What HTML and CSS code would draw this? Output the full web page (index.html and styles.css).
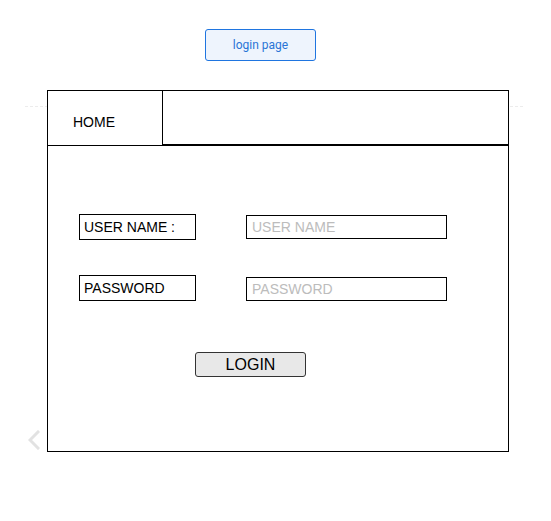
FILE: index.html
```html
<!DOCTYPE html>
<html lang="en">
<head>
<meta charset="utf-8">
<title>login page</title>
<link rel="stylesheet" href="styles.css">
</head>
<body>
  <div class="toolbar">
    <button class="page-btn" type="button">login page</button>
  </div>
  <div class="stage">
    <div class="gutter">
      <svg class="chevron" width="12" height="20" viewBox="0 0 12 20" aria-hidden="true">
        <path d="M10 2 L2 10 L10 18" fill="none" stroke="#e2e2e2" stroke-width="3" stroke-linecap="square"/>
      </svg>
    </div>
    <div class="frame">
      <div class="tabs">
        <div class="tab">HOME</div>
        <div class="tab-rest"></div>
      </div>
      <div class="form">
        <div class="row">
          <div class="label">USER NAME :</div>
          <input class="field" type="text" placeholder="USER NAME">
        </div>
        <div class="row row-2">
          <div class="label">PASSWORD</div>
          <input class="field field-2" type="password" placeholder="PASSWORD">
        </div>
        <div class="actions">
          <button class="login-btn" type="button">LOGIN</button>
        </div>
      </div>
    </div>
  </div>
</body>
</html>
```
FILE: styles.css
```css
* { box-sizing: border-box; }
html, body { margin: 0; padding: 0; background: #fff; }
body { font-family: "Liberation Sans", Arial, sans-serif; color: #000; width: 551px; height: 521px; overflow: hidden; }

.toolbar { padding: 29px 0 0 205px; }
.page-btn {
  display: block;
  width: 111px;
  height: 32px;
  margin: 0;
  padding: 0;
  border: 1px solid #1f75e0;
  border-radius: 3px;
  background: #eef4fd;
  color: #2a74d6;
  font-family: Roboto, "Liberation Sans", sans-serif;
  font-size: 12px;
}

.stage {
  margin: 29px 0 0 25px;
  width: 500px;
  display: flex;
  background-image: repeating-linear-gradient(to right, #ececec 0 3px, transparent 3px 5px);
  background-repeat: no-repeat;
  background-size: 100% 1px;
  background-position: 0 16px;
}
.gutter { width: 22px; display: flex; align-items: flex-end; padding: 0 0 2px 3px; }
.chevron { display: block; }

.frame {
  width: 462px;
  height: 362px;
  border: 1px solid #000;
  background: #fff;
  display: flex;
  flex-direction: column;
}
.tabs { display: flex; height: 55px; }
.tab {
  width: 115px;
  border-right: 1px solid #000;
  border-bottom: 1px solid #000;
  padding: 23px 0 0 25px;
  font-size: 14px;
  line-height: 16px;
}
.tab-rest { flex: 1; border-bottom: 2px solid #000; }

.form { flex: 1; padding: 68px 0 0 31px; }
.row { display: flex; align-items: center; gap: 50px; height: 26px; }
.row-2 { margin-top: 35px; }
.label {
  width: 117px;
  height: 26px;
  border: 1px solid #000;
  padding: 4px 0 0 4px;
  font-size: 14px;
  line-height: 16px;
}
.field {
  width: 201px;
  height: 24px;
  margin: 0;
  border: 1px solid #000;
  border-radius: 0;
  padding: 0 0 0 5px;
  font-family: "Liberation Sans", Arial, sans-serif;
  font-size: 14px;
  color: #000;
  outline: none;
  background: #fff;
}
.field-2 { margin-top: 1px; }
.field::placeholder { color: #bcbcbc; opacity: 1; }

.actions { padding: 51px 0 0 116px; }
.login-btn {
  display: block;
  width: 111px;
  height: 25px;
  margin: 0;
  padding: 0;
  border: 1px solid #333;
  border-radius: 3px;
  background: #e8e8e8;
  font-family: "Liberation Sans", Arial, sans-serif;
  font-size: 16px;
  color: #000;
}
```
